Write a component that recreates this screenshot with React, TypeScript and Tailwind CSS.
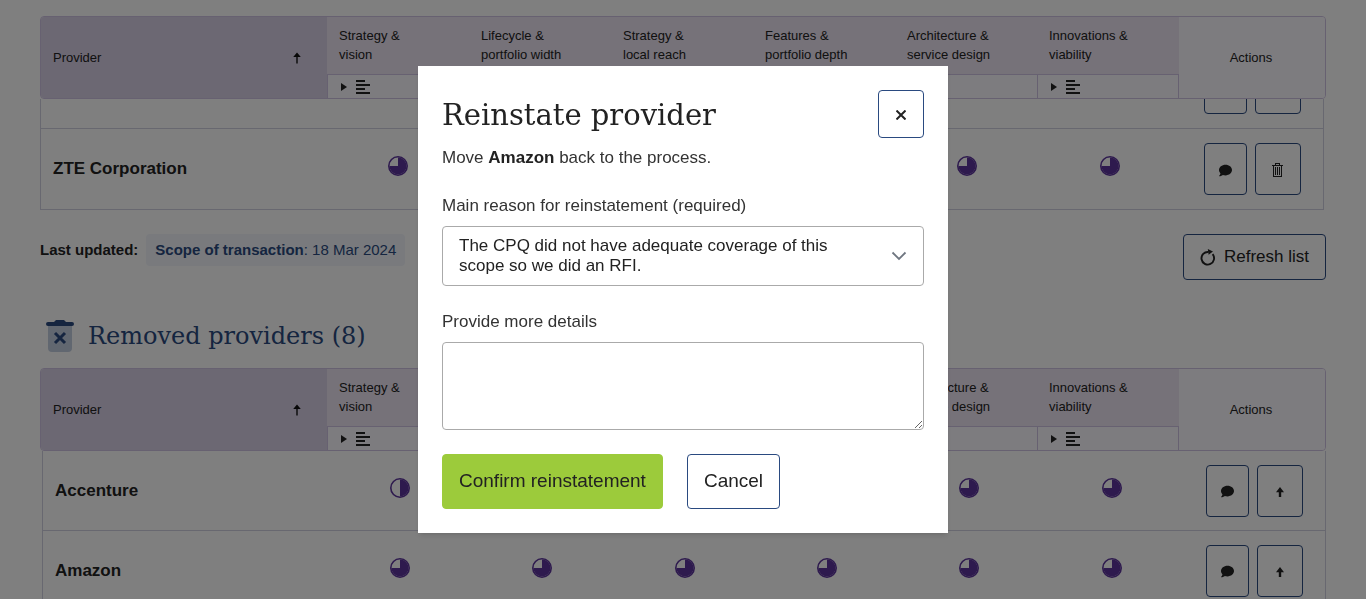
import { useState } from "react";
import { FaComment } from "react-icons/fa";

type Level = "half" | "threeQuarters";
type Provider = { name: string; levels: Level[] };

const CRITERIA = [
  ["Strategy &", "vision"],
  ["Lifecycle &", "portfolio width"],
  ["Strategy &", "local reach"],
  ["Features &", "portfolio depth"],
  ["Architecture &", "service design"],
  ["Innovations &", "viability"],
];

const Q: Level = "threeQuarters";
const ACTIVE: Provider[] = [
  { name: "", levels: [Q, Q, Q, Q, Q, Q] },
  { name: "ZTE Corporation", levels: [Q, Q, Q, Q, Q, Q] },
];
const REMOVED: Provider[] = [
  { name: "Accenture", levels: ["half", Q, Q, Q, Q, Q] },
  { name: "Amazon", levels: [Q, Q, Q, Q, Q, Q] },
];

const REASON = "The CPQ did not have adequate coverage of this scope so we did an RFI.";

function HarveyBall({ level }: { level: Level }) {
  return (
    <svg viewBox="0 0 20 20" className="mx-auto block size-5" role="img" aria-label={level === "half" ? "50%" : "75%"}>
      <circle cx="10" cy="10" r="9.2" fill="none" stroke="#5c349c" strokeWidth="1.6" />
      <path d={level === "half" ? "M10 1.5a8.5 8.5 0 0 1 0 17z" : "M10 10V1.5a8.5 8.5 0 1 1-8.5 8.5z"} fill="#5c349c" />
    </svg>
  );
}

function TrashOutline() {
  return (
    <svg viewBox="0 0 11 14" className="h-3.5 w-[11px]" fill="#222" shapeRendering="crispEdges">
      <path d="M3 0h5v1H3zM3 0h1v2H3zM7 0h1v2H7zM0 2h11v1H0zM1 3h1v11H1zM9 3h1v11H9zM1 13h9v1H1zM3 4h1v8H3zM5 4h1v8H5zM7 4h1v8H7z" />
    </svg>
  );
}

function ArrowUp() {
  return (
    <svg viewBox="0 0 10 10" className="size-2.5" fill="#222">
      <path d="M5 0l4 5.2H6.2V10H3.8V5.2H1z" />
    </svg>
  );
}

function RefreshIcon() {
  return (
    <svg viewBox="0 0 16 18" className="h-[18px] w-4" fill="none">
      <path d="M12.600 6.200A6.300 6.300 0 1 1 8.500 4" stroke="#222" strokeWidth="1.900" />
      <path d="M7.800 1l5.200 2.400-4.400 3.400z" fill="#222" />
    </svg>
  );
}

function BinIcon() {
  return (
    <svg viewBox="0 0 28 32" className="h-8 w-7">
      <path d="M2 3h24v25a4 4 0 0 1-4 4H6a4 4 0 0 1-4-4z" fill="#c3cee0" />
      <path d="M2 2h6l2-2h8l2 2h6a2 2 0 0 1 0 4H2a2 2 0 0 1 0-4z" fill="#2a4a80" />
      <path d="M9 13l10 10M19 13l-10 10" stroke="#2a4a80" strokeWidth="3" />
    </svg>
  );
}

function Columns({ actions }: { actions: string }) {
  return (
    <colgroup>
      <col className="w-[286px]" />
      {CRITERIA.map((_, i) => (
        <col key={i} />
      ))}
      <col className={actions} />
    </colgroup>
  );
}

function HeaderTable() {
  return (
    <div className="overflow-hidden rounded-[4px] border border-[#cfc2e2]">
      <table className="w-full table-fixed border-separate border-spacing-0 text-left text-[13px] leading-[19px] text-[#222]">
        <Columns actions="w-[146px]" />
        <thead>
          <tr className="h-[57px]">
            <th rowSpan={2} scope="col" className="bg-[#d8d0e6] px-3 font-normal">
              <div className="flex items-center justify-between pr-3">
                Provider
                <svg viewBox="0 0 8 12" className="mr-0.5 h-3 w-2">
                  <path d="M4 .5l3.800 4.500H4.700V11.500H3.300V5H.200z" fill="#111" />
                </svg>
              </div>
            </th>
            {CRITERIA.map(([a, b]) => (
              <th key={a + b} scope="col" className="bg-[#ece4f2] px-3 pt-0 pb-0.5 font-normal">
                {a}
                <br />
                {b}
              </th>
            ))}
            <th rowSpan={2} scope="col" className="bg-[#faf8fe] pr-0.5 text-center font-normal">
              Actions
            </th>
          </tr>
          <tr className="h-6">
            {CRITERIA.map(([a, b], i) => (
              <td
                key={a + b}
                className={
                  "border-t border-l border-[#cfc2e2] bg-[#faf8fe] px-3 py-0 " + (i === CRITERIA.length - 1 ? "border-r" : "")
                }
              >
                <svg viewBox="0 0 32 16" className="h-4 w-8" fill="#222">
                  <path d="M1 4l6 4-6 4z" />
                  <path d="M16 1h9v2h-9zM16 5h14v2H16zM16 9h9v2h-9zM16 13h14v2H16z" />
                </svg>
              </td>
            ))}
          </tr>
        </thead>
      </table>
    </div>
  );
}

function BodyTable({ rows, removed }: { rows: Provider[]; removed?: boolean }) {
  return (
    <table className="w-full table-fixed border-separate border-spacing-0 border-x border-[#d0d0e0] text-[#222]">
      <Columns actions="w-[142px]" />
      <tbody>
        {rows.map((p, r) => (
          <tr key={r} className={removed ? "h-20" : "h-[81px]"}>
            <th scope="row" className="border-b border-[#d0d0e0] px-3 py-0 text-left text-[17px] leading-6 font-bold">
              {p.name}
            </th>
            {p.levels.map((level, i) => (
              <td key={i} className="border-b border-[#d0d0e0] p-0 pb-1.5">
                <HarveyBall level={level} />
              </td>
            ))}
            <td className="border-b border-[#d0d0e0] p-0">
              <div className="flex justify-center gap-2">
                <button aria-label="Comment" className="flex h-[52px] w-[43px] items-center justify-center rounded-[4px] border border-[#2a4a80] pt-0.5">
                  <FaComment className="size-[13px]" />
                </button>
                <button
                  aria-label={removed ? "Reinstate" : "Remove"}
                  className="flex h-[52px] w-[46px] items-center justify-center rounded-[4px] border border-[#2a4a80] pt-0.5"
                >
                  {removed ? <ArrowUp /> : <TrashOutline />}
                </button>
              </div>
            </td>
          </tr>
        ))}
      </tbody>
    </table>
  );
}

function ReinstateDialog() {
  const [details, setDetails] = useState("");
  return (
    <div className="fixed inset-0 z-10 flex items-center justify-center bg-black/50">
      <div role="dialog" aria-modal="true" aria-labelledby="dialog-title" className="w-[530px] bg-white p-6 text-[17px] leading-5 text-[#222] shadow-md">
        <div className="flex items-center justify-between">
          <h1 id="dialog-title" className="pt-0.5 font-['DejaVu_Serif',serif] text-[29px] leading-10">
            Reinstate provider
          </h1>
          <button aria-label="Close" className="flex h-12 w-[46px] items-center justify-center rounded-[4px] border border-[#2a4a80] pt-0.5">
            <svg viewBox="0 0 10 10" className="size-2.5">
              <path d="M.5 .5l9 9M9.500 .5l-9 9" stroke="#222" strokeWidth="2" />
            </svg>
          </button>
        </div>
        <p className="mt-2.5 text-[#333]">
          Move <strong className="text-[#222]">Amazon</strong> back to the process.
        </p>
        <label htmlFor="reason" className="mt-7 block text-[#333]">
          Main reason for reinstatement (required)
        </label>
        <div className="relative mt-2.5 flex items-center justify-between rounded-[4px] border border-[#aaa] px-4 py-[9px] focus-within:border-[#2a4a80]">
          <span aria-hidden="true" className="w-[400px]">
            {REASON}
          </span>
          <svg viewBox="0 0 16 16" className="size-4" fill="none">
            <path d="M1.500 4.500L8 11l6.500-6.500" stroke="#6f7680" strokeWidth="1.800" />
          </svg>
          <select id="reason" className="absolute inset-0 size-full cursor-pointer opacity-0">
            <option>{REASON}</option>
          </select>
        </div>
        <label htmlFor="details" className="mt-[26px] block text-[#333]">
          Provide more details
        </label>
        <textarea
          id="details"
          value={details}
          onChange={(e) => setDetails(e.target.value)}
          className="mt-2.5 block h-[88px] w-full rounded-[4px] border border-[#aaa] px-4 py-2"
        />
        <div className="mt-6 flex gap-6 text-[19px] leading-[51px]">
          <button className="rounded-[4px] border border-[#9ccb3b] bg-[#9ccb3b] px-4 pb-0.5">Confirm reinstatement</button>
          <button className="rounded-[4px] border border-[#2a4a80] px-4 pb-0.5">Cancel</button>
        </div>
      </div>
    </div>
  );
}

export default function App() {
  return (
    <div className="h-screen overflow-hidden bg-white px-10 pt-4 font-['Liberation_Sans',Arial,sans-serif]">
      <main>
        <HeaderTable />
        <div className="mr-0.5 flex h-[111px] flex-col justify-end overflow-hidden">
          <BodyTable rows={ACTIVE} />
        </div>

        <div className="mt-6 flex items-start justify-between text-[15px]">
          <div className="flex items-center gap-2 leading-8">
            <strong className="text-[#222]">Last updated:</strong>
            <span className="rounded-[4px] bg-[#f2f5fb] px-[9px] text-[#2a4a80]">
              <strong>Scope of transaction</strong>: 18 Mar 2024
            </span>
          </div>
          <button className="flex h-[46px] items-center gap-2 rounded-[4px] border border-[#2a4a80] px-4 text-[17px] text-[#222]">
            <RefreshIcon />
            Refresh list
          </button>
        </div>

        <h2 className="mt-10 mb-4 flex h-8 items-center gap-3.5 pl-1.5 font-['DejaVu_Serif',serif] text-[24px] text-[#2a4a80]">
          <BinIcon />
          Removed providers (8)
        </h2>

        <HeaderTable />
        <div className="ml-0.5">
          <BodyTable rows={REMOVED} removed />
        </div>
      </main>
      <ReinstateDialog />
    </div>
  );
}
